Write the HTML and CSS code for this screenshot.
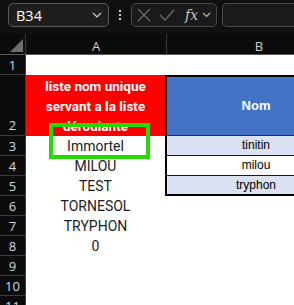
FILE: index.html
```html
<!DOCTYPE html>
<html lang="fr">

<head>
    <meta charset="UTF-8">
    <meta name="viewport" content="width=device-width, initial-scale=1.0">
    <title>Liste déroulante</title>
    <link rel="stylesheet" href="styles.css">
</head>

<body>
    <div class="formula-bar">
        <div class="name-box">
            <span>B34</span>
            <svg class="chev" width="10" height="6" viewBox="0 0 10 6"><path d="M1 1l4 4 4-4" fill="none" stroke="#cfcfcf" stroke-width="1.2"/></svg>
        </div>
        <div class="dots"><i></i><i></i><i></i></div>
        <div class="tools">
            <svg width="14" height="14" viewBox="0 0 14 14"><path d="M1 1l12 12M13 1L1 13" stroke="#6b6b6b" stroke-width="1.3"/></svg>
            <svg width="16" height="14" viewBox="0 0 16 14"><path d="M1 7l5 5 9-10" fill="none" stroke="#6b6b6b" stroke-width="1.3"/></svg>
            <span class="fx">fx</span>
            <svg width="9" height="6" viewBox="0 0 9 6"><path d="M1 1l3.5 3.5L8 1" fill="none" stroke="#bdbdbd" stroke-width="1.1"/></svg>
        </div>
        <div class="formula-input"></div>
    </div>

    <div class="sheet">
        <div class="col-head">
            <div class="corner"><span class="select-all"></span></div>
            <div class="col-a">A</div>
            <div class="col-b">B</div>
        </div>

        <div class="row">
            <div class="num">1</div>
            <div class="cell a"></div>
            <div class="cell b"></div>
        </div>
        <div class="row tall">
            <div class="num">2</div>
            <div class="cell a title">liste nom unique<br>servant a la liste<br>déroulante</div>
            <div class="cell b head">Nom</div>
        </div>
        <div class="row">
            <div class="num">3</div>
            <div class="cell a">Immortel</div>
            <div class="cell b band">tinitin</div>
        </div>
        <div class="row">
            <div class="num">4</div>
            <div class="cell a">MILOU</div>
            <div class="cell b plain">milou</div>
        </div>
        <div class="row">
            <div class="num">5</div>
            <div class="cell a">TEST</div>
            <div class="cell b band last">tryphon</div>
        </div>
        <div class="row">
            <div class="num">6</div>
            <div class="cell a">TORNESOL</div>
            <div class="cell b"></div>
        </div>
        <div class="row">
            <div class="num">7</div>
            <div class="cell a">TRYPHON</div>
            <div class="cell b"></div>
        </div>
        <div class="row">
            <div class="num">8</div>
            <div class="cell a">0</div>
            <div class="cell b"></div>
        </div>
        <div class="row">
            <div class="num">9</div>
            <div class="cell a"></div>
            <div class="cell b"></div>
        </div>
        <div class="row">
            <div class="num">10</div>
            <div class="cell a"></div>
            <div class="cell b"></div>
        </div>
        <div class="row">
            <div class="num">11</div>
            <div class="cell a"></div>
            <div class="cell b"></div>
        </div>
    </div>

    <!-- highlight drawn over A3 -->
    <div class="highlight"></div>
</body>

</html>
```

FILE: styles.css
```css
* {
    box-sizing: border-box;
}

body {
    margin: 0;
    background-color: #ffffff;
    font-family: "Open Sans", "Noto Sans", sans-serif;
    overflow: hidden;
    position: relative;
    width: 294px;
    height: 305px;
}

/* Formula bar */
.formula-bar {
    display: flex;
    align-items: flex-start;
    height: 34px;
    padding-top: 3px;
    background-color: #101010;
}

.name-box {
    display: flex;
    align-items: center;
    justify-content: space-between;
    width: 101px;
    height: 24px;
    margin-left: 8px;
    padding: 0 6px 0 7px;
    background-color: #1e1e1e;
    border: 1px solid #5a5a5a;
    border-radius: 5px;
    color: #ffffff;
    font-family: "Open Sans", sans-serif;
    font-size: 14.5px;
}

.dots {
    display: flex;
    flex-direction: column;
    justify-content: center;
    gap: 2px;
    width: 22px;
    height: 24px;
    align-items: center;
}

.dots i {
    display: block;
    width: 2px;
    height: 2px;
    background-color: #d0d0d0;
}

.tools {
    display: flex;
    align-items: center;
    gap: 8px;
    width: 86px;
    height: 24px;
    padding-left: 5px;
    background-color: #1a1a1a;
    border: 1px solid #4a4a4a;
    border-radius: 5px;
}

.tools .fx {
    font-family: "DejaVu Serif", "Liberation Serif", serif;
    font-style: italic;
    font-size: 14px;
    color: #c4c4c4;
    margin-left: 2px;
    margin-right: -4px;
}

.formula-input {
    flex: 1;
    height: 24px;
    margin-left: 5px;
    background-color: #1a1a1a;
    border: 1px solid #4a4a4a;
    border-right: none;
    border-radius: 5px 0 0 5px;
}

/* Column headers */
.col-head {
    display: flex;
    height: 21px;
    background-color: #0b0b0b;
    border-bottom: 1px solid #5a5a5a;
    color: #d0d0d0;
    font-size: 13px;
    line-height: 20px;
}

.corner {
    position: relative;
    flex: none;
    width: 26px;
    border-right: 1px solid #3c3c3c;
}

.select-all {
    position: absolute;
    right: 2px;
    bottom: 2px;
    width: 0;
    height: 0;
    border-left: 13px solid transparent;
    border-bottom: 13px solid #6e6e6e;
}

.col-a {
    flex: none;
    width: 141px;
    text-align: center;
    border-right: 1px solid #3c3c3c;
    padding-top: 2px;
}

.col-b {
    flex: none;
    width: 180px;
    text-align: center;
    padding-top: 2px;
    padding-left: 4px;
}

/* Rows */
.row {
    display: flex;
    height: 20px;
}

.row.tall {
    height: 61px;
}

.num {
    flex: none;
    width: 26px;
    background-color: #0b0b0b;
    border-right: 1px solid #3c3c3c;
    border-bottom: 1px solid #3c3c3c;
    color: #d4d8e0;
    font-size: 13px;
    text-align: center;
    line-height: 20px;
}

.row.tall .num {
    display: flex;
    align-items: flex-end;
    justify-content: center;
}

.cell {
    flex: none;
    text-align: center;
}

.cell.a {
    width: 139px;
    font-family: Roboto, "Noto Sans", sans-serif;
    font-size: 14px;
    line-height: 20px;
    color: #1c1c1c;
}

.cell.a.title {
    display: flex;
    align-items: flex-end;
    justify-content: center;
    background-color: #ff0000;
    color: #ffffff;
    font-weight: bold;
    font-size: 13.5px;
    line-height: 20px;
    padding-bottom: 0;
}

.cell.b {
    width: 180px;
    font-family: "Liberation Sans", Arial, sans-serif;
    font-size: 12px;
    line-height: 18px;
    color: #000000;
}

.cell.b.head {
    display: flex;
    align-items: center;
    justify-content: center;
    background-color: #4472c4;
    color: #ffffff;
    font-weight: bold;
    font-size: 13px;
    border-top: 2px solid #000000;
    border-left: 2px solid #000000;
    border-bottom: 1px solid #1f2f4f;
}

.cell.b.band,
.cell.b.plain {
    border-left: 2px solid #000000;
    border-bottom: 1px solid #1a1a1a;
}

.cell.b.band {
    background-color: #d9e1f2;
}

.cell.b.plain {
    background-color: #ffffff;
}

.cell.b.last {
    border-bottom: 2px solid #000000;
}

/* Green highlight box over A3 */
.highlight {
    position: absolute;
    left: 49px;
    top: 123px;
    width: 101px;
    height: 36px;
    border: 4px solid #22dc00;
}
```
